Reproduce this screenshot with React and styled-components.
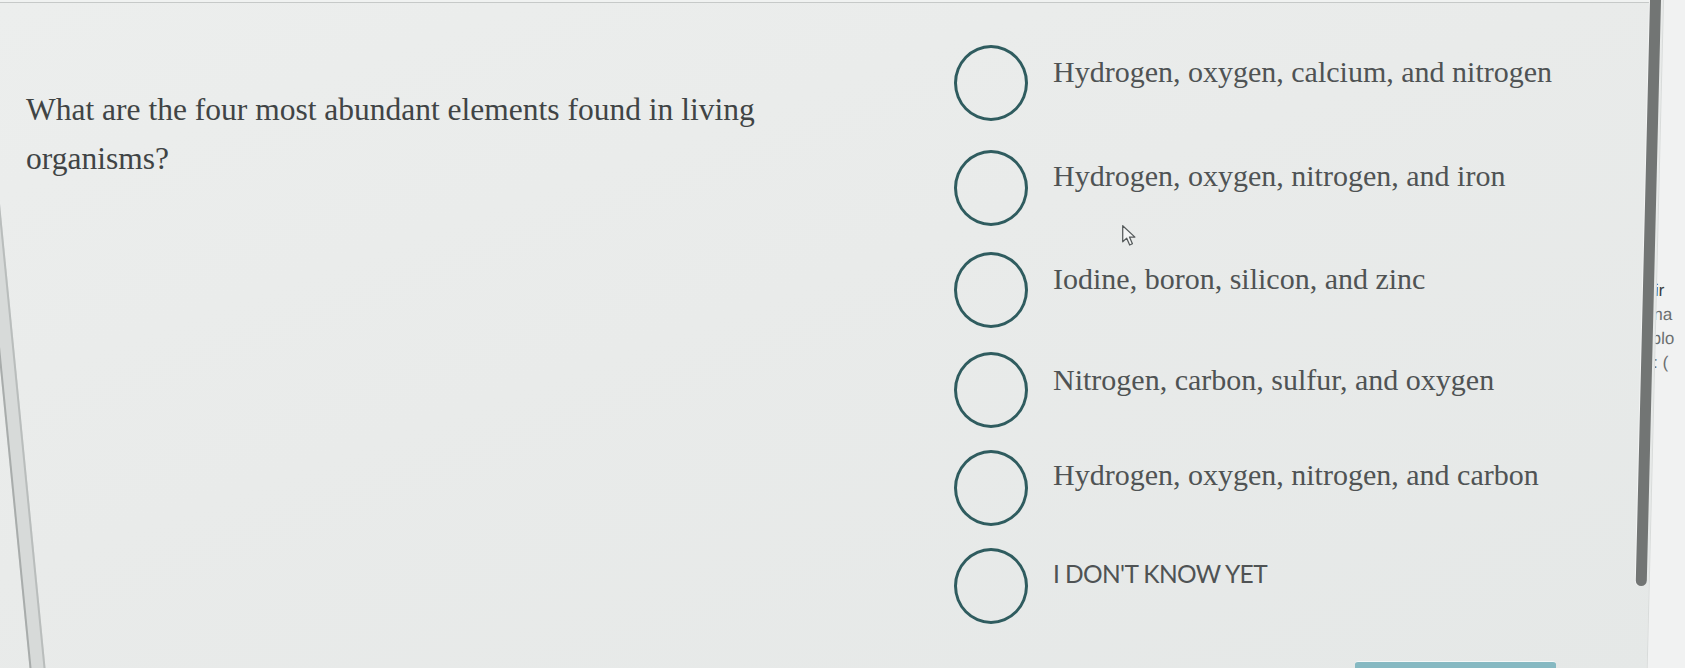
import React from "react";
import styled, { createGlobalStyle } from "styled-components";

const GlobalStyle = createGlobalStyle`
  html, body {
    margin: 0;
    padding: 0;
    background: #e8eae9;
    overflow: hidden;
  }
  * { box-sizing: border-box; }
`;

const Screen = styled.div`
  position: relative;
  width: 1685px;
  height: 668px;
  display: flex;
  overflow: hidden;
  background: linear-gradient(160deg, #eceeed 0%, #e9ebea 45%, #e5e8e7 100%);
  font-family: "Liberation Serif", "Times New Roman", serif;
`;

const Main = styled.main`
  flex: 1 1 auto;
  min-width: 0;
  display: flex;
  flex-direction: column;
`;

const TopStrip = styled.div`
  height: 3px;
  flex: 0 0 auto;
  background: #f0f2f1;
  border-bottom: 1.5px solid #c6c9c8;
`;

const Content = styled.section`
  flex: 1 1 auto;
  display: grid;
  grid-template-columns: 954px 1fr;
`;

const Question = styled.h2`
  margin: 0;
  padding: 82px 0 0 26px;
  max-width: 820px;
  font-family: "Liberation Serif", "Times New Roman", serif;
  font-weight: 400;
  font-size: 31.5px;
  line-height: 49px;
  color: #404445;
`;

const Options = styled.ul`
  list-style: none;
  margin: 0;
  padding: 41.5px 0 0 0;
  display: flex;
  flex-direction: column;
`;

const Option = styled.li`
  height: ${(p) => p.$h}px;
  flex: 0 0 auto;
  display: flex;
  align-items: flex-start;
  gap: 25px;
`;

const Radio = styled.span`
  flex: 0 0 auto;
  width: 74px;
  height: 76px;
  border-radius: 50%;
  border: 3px solid #2f5c5f;
`;

const Label = styled.span`
  margin-top: ${(p) => p.$top}px;
  font-family: ${(p) =>
    p.$sans
      ? `"Lato", "Liberation Sans", Arial, sans-serif`
      : `"Liberation Serif", "Times New Roman", serif`};
  font-size: ${(p) => (p.$sans ? "24.5px" : "30px")};
  letter-spacing: ${(p) => (p.$sans ? "-0.6px" : "0")};
  line-height: 36px;
  color: #4f5354;
  white-space: nowrap;
`;

const Footer = styled.div`
  flex: 0 0 7px;
  display: flex;
  justify-content: flex-end;
  padding-right: 94px;
`;

const ActionButton = styled.button`
  width: 201px;
  height: 7px;
  padding: 0;
  border: none;
  border-top: 1px solid #f4f8f8;
  border-radius: 3px 3px 0 0;
  background: #86b9c2;
`;

const RightRail = styled.aside`
  flex: 0 0 85px;
  margin-right: -50px;
  display: flex;
  transform: skewX(-1.4deg);
  transform-origin: top left;
`;

const Scrollbar = styled.div`
  flex: 0 0 11px;
  height: 586px;
  border-radius: 0 0 6px 6px;
  background: #727574;
  box-shadow: -1px 0 0 #f3f4f4;
`;

const SidePanel = styled.div`
  flex: 1 1 auto;
  margin-left: 2px;
  padding: 279px 0 0 0;
  background: #f1f2f2;
  border-left: 1px solid #d8dbda;
  font-family: "Liberation Sans", Arial, sans-serif;
  font-size: 17px;
  line-height: 24px;
  color: #6b6f70;
  overflow: hidden;
`;

const SideLine = styled.div`
  white-space: nowrap;
  margin-left: ${(p) => p.$shift || 0}px;
  color: ${(p) => (p.$strong ? "#3b3f40" : "#6b6f70")};
`;

const Bezel = styled.div`
  position: absolute;
  left: -36px;
  top: 0;
  width: 16px;
  height: 100%;
  background: #d7dad9;
  border-left: 2px solid #a8acab;
  border-right: 2px solid #b9bdbc;
  transform: skewX(5.6deg);
  transform-origin: top left;
  pointer-events: none;
`;

const Cursor = styled.svg`
  position: absolute;
  left: 1121px;
  top: 224px;
  width: 16px;
  height: 23px;
  pointer-events: none;
`;

const options = [
  { text: "Hydrogen, oxygen, calcium, and nitrogen", h: 105, top: 9 },
  { text: "Hydrogen, oxygen, nitrogen, and iron", h: 102, top: 8 },
  { text: "Iodine, boron, silicon, and zinc", h: 100, top: 9 },
  { text: "Nitrogen, carbon, sulfur, and oxygen", h: 98, top: 10 },
  { text: "Hydrogen, oxygen, nitrogen, and carbon", h: 98, top: 7 },
];

export default function App() {
  return (
    <>
      <GlobalStyle />
      <Screen>
        <Main>
          <TopStrip />
          <Content>
            <Question>
              What are the four most abundant elements found in living organisms?
            </Question>
            <Options>
              {options.map((o) => (
                <Option key={o.text} $h={o.h}>
                  <Radio />
                  <Label $top={o.top}>{o.text}</Label>
                </Option>
              ))}
              <Option $h={96}>
                <Radio />
                <Label $sans $top={8.5}>
                  I DON'T KNOW YET
                </Label>
              </Option>
            </Options>
          </Content>
          <Footer>
            <ActionButton aria-label="Submit" />
          </Footer>
        </Main>
        <RightRail>
          <Scrollbar />
          <SidePanel>
            <SideLine $strong $shift={-2}>ir</SideLine>
            <SideLine $shift={-3}>na</SideLine>
            <SideLine $shift={-4}>plo</SideLine>
            <SideLine $shift={-2}>: (</SideLine>
          </SidePanel>
        </RightRail>
        <Bezel />
        <Cursor viewBox="0 0 14 20">
          <path
            d="M1.5 1.5 L1.5 15.5 L5 12.3 L7.6 18.3 L10 17.2 L7.4 11.4 L12.2 11.4 Z"
            fill="#f4f5f5"
            stroke="#555a5b"
            strokeWidth="1.1"
            strokeLinejoin="round"
          />
        </Cursor>
      </Screen>
    </>
  );
}
